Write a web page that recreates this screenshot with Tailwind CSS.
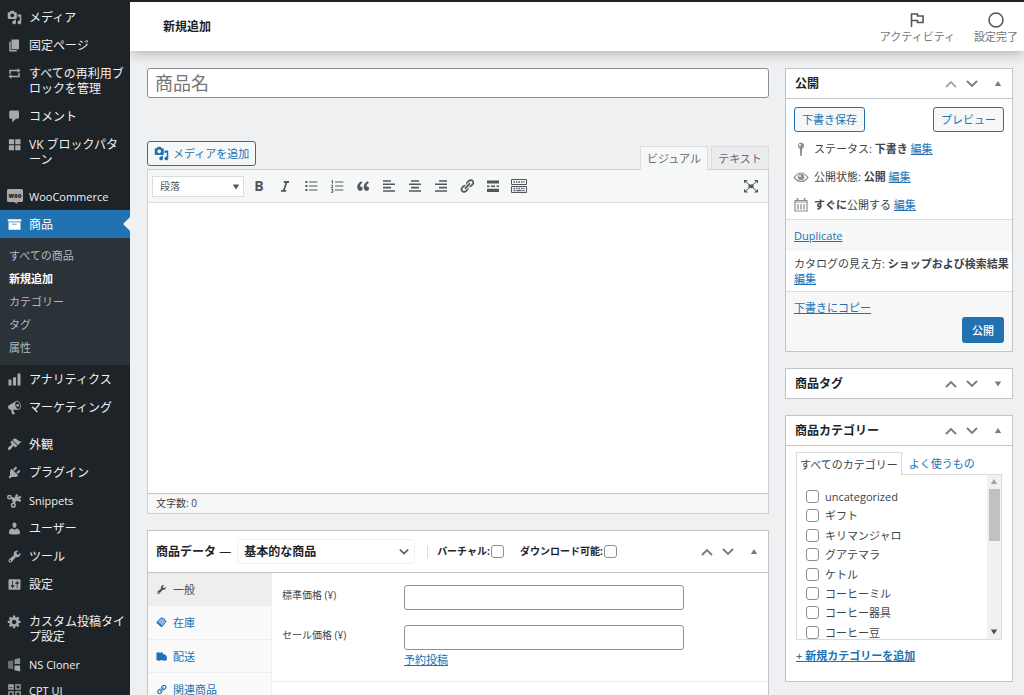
<!DOCTYPE html>
<html lang="ja">
<head>
<meta charset="utf-8">
<meta name="viewport" content="width=device-width, initial-scale=1">
<title>新規追加</title>
<script src="https://cdn.jsdelivr.net/npm/@tailwindcss/browser@4"></script>
</head>
<body class="flex h-screen flex-col overflow-hidden bg-[#eff0f1] font-['Open_Sans','Noto_Sans_CJK_JP',sans-serif] text-[11px] leading-[15px] text-[#3c434a]">

<svg class="hidden" aria-hidden="true">
  <symbol id="media" viewBox="0 0 20 20"><path d="M13 11V4c0-.55-.45-1-1-1h-1.67L9 1H5L3.67 3H2c-.55 0-1 .45-1 1v7c0 .55.45 1 1 1h10c.55 0 1-.45 1-1zM7 4.5c1.38 0 2.5 1.12 2.5 2.5S8.38 9.5 7 9.5 4.5 8.38 4.5 7 5.62 4.5 7 4.5zM14 6h5v10.5c0 1.38-1.12 2.5-2.5 2.5S14 17.88 14 16.5s1.12-2.5 2.5-2.5c.17 0 .34.02.5.05V9h-3V6zm-4 8.05V13h2v3.5c0 1.38-1.12 2.5-2.5 2.5S7 17.88 7 16.5 8.12 14 9.5 14c.17 0 .34.02.5.05z"/></symbol>
  <symbol id="wrench" viewBox="0 0 20 20"><path d="M16.68 9.77c-1.34 1.34-3.3 1.67-4.95.99l-5.41 6.52c-.99.99-2.59.99-3.58 0s-.99-2.59 0-3.57l6.52-5.42c-.68-1.65-.35-3.61.99-4.95 1.28-1.28 3.12-1.62 4.72-1.06l-2.89 2.89 2.82 2.82 2.86-2.87c.53 1.58.18 3.39-1.08 4.65zM3.81 16.21c.4.39 1.04.39 1.43 0 .4-.4.4-1.04 0-1.43-.39-.4-1.03-.4-1.43 0-.39.39-.39 1.03 0 1.43z"/></symbol>
  <symbol id="link" viewBox="0 0 20 20"><path d="M17.74 2.76c1.68 1.69 1.68 4.41 0 6.1l-1.53 1.52c-1.12 1.12-2.7 1.47-4.14 1.09l2.62-2.61.76-.77.76-.76c.84-.84.84-2.2 0-3.04-.84-.85-2.2-.85-3.04 0l-.77.76-3.38 3.38c-.37-1.44-.02-3.02 1.1-4.14l1.52-1.53c1.69-1.68 4.42-1.68 6.1 0zM8.59 13.43l5.34-5.34c.42-.42.42-1.1 0-1.52-.44-.43-1.13-.39-1.53 0l-5.33 5.34c-.42.42-.42 1.1 0 1.52.44.43 1.13.39 1.52 0zm-.76 2.29l4.14-4.15c.38 1.44.03 3.02-1.09 4.14l-1.52 1.53c-1.69 1.68-4.41 1.68-6.1 0-1.68-1.68-1.68-4.42 0-6.1l1.53-1.52c1.12-1.12 2.7-1.47 4.14-1.1l-4.14 4.15c-.85.84-.85 2.2 0 3.05.84.84 2.2.84 3.04 0z"/></symbol>
  <symbol id="up" viewBox="0 0 12 12"><path d="M1 9l5-5 5 5" fill="none" stroke="currentColor" stroke-width="1.9"/></symbol>
  <symbol id="down" viewBox="0 0 12 12"><path d="M1 3l5 5 5-5" fill="none" stroke="currentColor" stroke-width="1.9"/></symbol>
  <symbol id="tri-up" viewBox="0 0 8 8"><path d="M4 1L7.200 6H.8z"/></symbol>
  <symbol id="tri-down" viewBox="0 0 8 8"><path d="M4 6.500L7.200 1.500H.8z"/></symbol>
</svg>

<div class="h-[2px] shrink-0 bg-[#1d2327]"></div>

<div class="flex min-h-0 flex-1">
  <!-- Admin menu -->
  <nav aria-label="メインメニュー" class="w-[130px] shrink-0 overflow-hidden bg-[#1d2327] pt-px text-xs leading-[15px] text-[#f0f0f1]">
    <ul class="break-all">
      <li><a href="#" class="flex pt-[7px] pb-[6px] pr-1"><span class="flex w-[29px] shrink-0 justify-center"><svg class="size-[15px] fill-[#a7aaad]"><use href="#media"/></svg></span>メディア</a></li>
      <li><a href="#" class="flex pt-[7px] pb-[6px] pr-1"><span class="flex w-[29px] shrink-0 justify-center"><svg class="size-[15px] fill-[#a7aaad]" viewBox="0 0 20 20"><path d="M6 15V2h10v13H6zm-1 1h8v2H3V5h2v11z"/></svg></span>固定ページ</a></li>
      <li><a href="#" class="flex pt-[7px] pb-[6px] pr-1"><span class="flex w-[29px] shrink-0 justify-center"><svg class="size-[15px] fill-[#a7aaad]" viewBox="0 0 20 20"><path d="M5 7v3l-2 1.500V5h11V3l4 3.010L14 9V7H5zm10 6v-3l2-1.500V15H6v2l-4-3.010L6 11v2h9z"/></svg></span>すべての再利用ブロックを管理</a></li>
      <li><a href="#" class="flex pt-[7px] pb-[6px] pr-1"><span class="flex w-[29px] shrink-0 justify-center"><svg class="size-[15px] fill-[#a7aaad]" viewBox="0 0 20 20"><path d="M5 2h9c1.100 0 2 .9 2 2v7c0 1.100-.9 2-2 2h-2l-5 5v-5H5c-1.100 0-2-.9-2-2V4c0-1.100.9-2 2-2z"/></svg></span>コメント</a></li>
      <li><a href="#" class="flex pt-[7px] pb-[6px] pr-1"><span class="flex w-[29px] shrink-0 justify-center"><svg class="size-[15px] fill-[#a7aaad]" viewBox="0 0 20 20"><path d="M2.500 3h7v6.500h-7zM11 3h7v6.500h-7zM2.500 11h7v6.500h-7zM11 11h7v6.500h-7z"/></svg></span><span class="[line-break:anywhere]">VK ブロックパターン</span></a></li>
      <li class="mt-[9px]"><a href="#" class="flex pt-[7px] pb-[6px] text-[11px]"><span class="flex w-[29px] shrink-0 justify-center"><svg class="h-[15px] w-4" viewBox="0 0 16 15"><path d="M1.500 0h13A1.500 1.500 0 0 1 16 1.500v10a1.500 1.500 0 0 1-1.500 1.500H10l.8 2L7 13H1.500A1.500 1.500 0 0 1 0 11.500v-10A1.500 1.500 0 0 1 1.500 0z" fill="#a7aaad"/><text x="8" y="8.500" text-anchor="middle" font-family="Noto Sans" font-weight="900" font-size="6" fill="#1d2327">woo</text></svg></span>WooCommerce</a></li>
      <li><a href="#" aria-current="true" class="relative flex bg-[#2271b1] pt-[7px] pb-[6px] text-white"><span class="flex w-[29px] shrink-0 justify-center"><svg class="size-[15px] fill-white" viewBox="0 0 20 20"><path d="M19 3v3H1V3h18zM2 7h16v10H2V7zm11 3V9H7v1h6z"/></svg></span>商品
        <svg class="absolute top-[7px] right-0 h-[14px] w-[7px] fill-[#eff0f1]" viewBox="0 0 7 14"><path d="M7 0v14L0 7z"/></svg></a>
        <ul class="bg-[#2c3338] py-[6px] pl-[9px] text-[11px] leading-[23px] text-[#b4b9be]">
          <li><a href="#">すべての商品</a></li>
          <li><a href="#" class="font-bold text-white">新規追加</a></li>
          <li><a href="#">カテゴリー</a></li>
          <li><a href="#">タグ</a></li>
          <li><a href="#">属性</a></li>
        </ul>
      </li>
      <li><a href="#" class="flex pt-[7px] pb-[6px]"><span class="flex w-[29px] shrink-0 justify-center"><svg class="size-[15px] fill-[#a7aaad]" viewBox="0 0 20 20"><path d="M18 18V2h-4v16h4zm-6 0V7H8v11h4zm-6 0v-8H2v8h4z"/></svg></span>アナリティクス</a></li>
      <li><a href="#" class="flex pt-[7px] pb-[6px]"><span class="flex w-[29px] shrink-0 justify-center"><svg class="size-[15px] fill-[#a7aaad]" viewBox="0 0 20 20"><path d="M18.150 5.940c.46 1.620.38 3.220-.02 4.480-.42 1.280-1.260 2.180-2.300 2.480-.16.06-.26.06-.4.06-.06.02-.12.02-.18.02-.06.02-.14.02-.22.02h-6.800l2.220 5.500c.02.14-.06.26-.14.34-.08.1-.24.16-.34.16H6.950c-.1 0-.26-.06-.34-.16-.08-.08-.16-.2-.14-.34l-1-5.500H4.250l-.02-.02c-.5.06-1.080-.18-1.540-.62s-.88-1.080-1.060-1.880c-.24-.8-.2-1.560-.02-2.200.18-.62.58-1.080 1.060-1.300l.02-.02 9-5.400c.1-.06.18-.1.24-.16.06-.04.14-.08.24-.12.16-.08.28-.12.5-.18 1.040-.3 2.240.1 3.220.98s1.840 2.240 2.260 3.860zm-2.580 5.980h-.02c.4-.1.74-.34 1.040-.7.58-.7.86-1.760.86-3.040 0-.64-.1-1.300-.28-1.980-.34-1.360-1.020-2.500-1.780-3.240s-1.680-1.100-2.460-.88c-.82.22-1.400.96-1.700 2-.32 1.040-.28 2.360.06 3.720.38 1.360 1 2.500 1.800 3.240.78.74 1.620 1.100 2.480.88z"/><circle cx="14.200" cy="7.200" r="1.800"/></svg></span>マーケティング</a></li>
      <li class="mt-[9px]"><a href="#" class="flex pt-[7px] pb-[6px]"><span class="flex w-[29px] shrink-0 justify-center"><svg class="size-[15px] fill-[#a7aaad]" viewBox="0 0 20 20"><path d="M14.480 11.060L7.410 3.990l1.500-1.500c.5-.56 2.300-.47 3.510.32 1.210.8 1.430 1.280 2.910 2.100 1.180.64 2.450 1.260 4.450.85zm-.71.71L6.700 4.700 4.930 6.470c-.39.39-.39 1.020 0 1.410l1.060 1.060c.39.39.39 1.030 0 1.420-.6.6-1.430 1.110-2.210 1.690-.35.26-.7.53-1.010.84C1.430 14.230.4 16.080 1.400 17.070c.99 1 2.840-.03 4.180-1.360.31-.31.58-.66.85-1.020.57-.78 1.080-1.610 1.690-2.210.39-.39 1.020-.39 1.410 0l1.060 1.060c.39.39 1.020.39 1.410 0z"/></svg></span>外観</a></li>
      <li><a href="#" class="flex pt-[7px] pb-[6px]"><span class="flex w-[29px] shrink-0 justify-center"><svg class="size-[15px] fill-[#a7aaad]" viewBox="0 0 20 20"><path d="M13.110 4.360L9.870 7.600 8 5.730l3.240-3.240c.35-.34 1.050-.2 1.560.32.52.51.66 1.210.31 1.550zm-8 1.770l.91-1.120 9.010 9.010-1.190.84c-.71.71-2.630 1.160-3.820 1.160H6.140L4.900 17.260c-.59.59-1.540.59-2.120 0-.59-.58-.59-1.530 0-2.120l1.240-1.240v-3.880c0-1.130.4-3.190 1.090-3.890zm7.260 3.970l3.240-3.240c.34-.35 1.040-.21 1.550.31.52.51.66 1.210.31 1.550l-3.240 3.250z"/></svg></span>プラグイン</a></li>
      <li><a href="#" class="flex pt-[7px] pb-[6px] text-[11px]"><span class="flex w-[29px] shrink-0 justify-center"><svg class="size-[15px] fill-none stroke-[#a7aaad]" viewBox="0 0 20 20"><circle cx="3.300" cy="5.500" r="2.300" stroke-width="2"/><circle cx="8.500" cy="16.200" r="2.400" stroke-width="2"/><path d="M5.500 6.500l13 4M9 14L13.500 2" stroke-width="3"/><path d="M7 10.500L18.500 5" stroke-width="3"/></svg></span>Snippets</a></li>
      <li><a href="#" class="flex pt-[7px] pb-[6px]"><span class="flex w-[29px] shrink-0 justify-center"><svg class="size-[15px] fill-[#a7aaad]" viewBox="0 0 20 20"><path d="M10 9.250c-2.270 0-2.730-3.440-2.730-3.440C7 4.020 7.820 2 9.970 2c2.160 0 2.980 2.020 2.710 3.810 0 0-.41 3.440-2.680 3.440zm0 2.570L12.720 10c2.390 0 4.520 2.330 4.520 4.530v2.490s-3.650 1.130-7.240 1.130c-3.650 0-7.240-1.130-7.240-1.130v-2.490c0-2.250 1.940-4.480 4.470-4.480z"/></svg></span>ユーザー</a></li>
      <li><a href="#" class="flex pt-[7px] pb-[6px]"><span class="flex w-[29px] shrink-0 justify-center"><svg class="size-[15px] fill-[#a7aaad]"><use href="#wrench"/></svg></span>ツール</a></li>
      <li><a href="#" class="flex pt-[7px] pb-[6px]"><span class="flex w-[29px] shrink-0 justify-center"><svg class="size-[15px] fill-[#a7aaad]" viewBox="0 0 20 20"><path d="M18 16V4c0-.55-.45-1-1-1H3c-.55 0-1 .45-1 1v12c0 .55.45 1 1 1h14c.55 0 1-.45 1-1zM8 11h1c.55 0 1 .45 1 1s-.45 1-1 1H8v1.500c0 .28-.22.5-.5.5s-.5-.22-.5-.5V13H6c-.55 0-1-.45-1-1s.45-1 1-1h1V5.500c0-.28.22-.5.5-.5s.5.22.5.5V11zm5-2h-1c-.55 0-1-.45-1-1s.45-1 1-1h1V5.500c0-.28.22-.5.5-.5s.5.22.5.5V7h1c.55 0 1 .45 1 1s-.45 1-1 1h-1v5.500c0 .28-.22.5-.5.5s-.5-.22-.5-.5V9z"/></svg></span>設定</a></li>
      <li class="mt-[9px]"><a href="#" class="flex pt-[7px] pb-[6px] pr-1"><span class="flex w-[29px] shrink-0 justify-center"><svg class="size-[15px] fill-[#a7aaad]" viewBox="0 0 20 20"><path d="M18 12h-2.180c-.17.7-.44 1.350-.81 1.930l1.540 1.540-2.100 2.100-1.540-1.540c-.58.36-1.230.63-1.910.79V19H8v-2.180c-.68-.16-1.330-.43-1.910-.79l-1.540 1.540-2.120-2.120 1.540-1.540c-.36-.58-.63-1.230-.79-1.910H1V9.030h2.170c.16-.7.44-1.350.8-1.940L2.430 5.550l2.100-2.100 1.540 1.540c.58-.37 1.240-.64 1.930-.81V2h3v2.180c.68.16 1.330.43 1.910.79l1.540-1.540 2.120 2.120-1.540 1.540c.36.59.64 1.240.8 1.940H18V12zm-8.500 1.500c1.660 0 3-1.340 3-3s-1.340-3-3-3-3 1.340-3 3 1.340 3 3 3z"/></svg></span>カスタム投稿タイプ設定</a></li>
      <li><a href="#" class="flex pt-[7px] pb-[6px] text-[11px]"><span class="flex w-[29px] shrink-0 justify-center"><svg class="size-[15px]" viewBox="0 0 16 16"><path d="M1 4.500l5.500-1v9.500L1 12z" fill="#6c7075"/><path d="M8 2.500L14 1v6.500H8z" fill="#8c9095"/><path d="M8 9h6v6.500L8 14z" fill="#a7aaad"/></svg></span>NS Cloner</a></li>
      <li><a href="#" class="flex pt-[5px] pb-[6px] text-[11px]"><span class="flex w-[29px] shrink-0 justify-center"><svg class="size-[15px] fill-none stroke-[#a7aaad]" viewBox="0 0 16 16"><path d="M2 2h4.500v4.500H2zM9.500 2H14v4.500H9.500zM2 9.500h4.500V14H2zM9.500 9.500H14V14H9.500zM2 2l4.500 4.500M6.500 2L2 6.500" stroke-width="1.300"/></svg></span>CPT UI</a></li>
    </ul>
  </nav>

  <div class="flex min-w-0 flex-1 flex-col">
    <!-- Page header -->
    <header class="z-10 flex h-[49px] shrink-0 items-center justify-between bg-white pl-[33px] shadow-[0_2px_12px_rgba(0,0,0,0.28)] [clip-path:inset(0_0_-20px_0)]">
      <h1 class="text-xs font-semibold text-[#1e1e1e]">新規追加</h1>
      <div class="flex gap-[19px] pr-[6px] text-[11px] leading-[15px] text-[#757575]">
        <button type="button" class="flex flex-col items-center gap-px pt-[2px]"><svg class="size-4" viewBox="0 0 16 16" fill="none" stroke="#50575e" stroke-width="1.600"><path d="M2.500 15V2h6v2h5.500v6.500H8.500v-2h-6"/></svg>アクティビティ</button>
        <button type="button" class="flex flex-col items-center gap-px pt-[2px]"><svg class="size-4" viewBox="0 0 16 16" fill="none" stroke="#50575e" stroke-width="1.500"><circle cx="8" cy="8" r="7"/></svg>設定完了</button>
      </div>
    </header>

    <main class="flex min-h-0 flex-1 items-start gap-4 pt-[17px] pr-[11px] pl-[17px]">
      <div class="min-w-0 flex-1">
        <input type="text" aria-label="商品名" placeholder="商品名" class="block h-[30px] w-full rounded-[3px] border border-[#8c8f94] bg-white px-[7px] text-lg leading-6 placeholder:text-[#757575]">

        <div class="mt-[43px] flex items-start justify-between">
          <button type="button" class="flex h-[25px] items-center gap-1 rounded-[3px] border border-[#2271b1] bg-[#f6f7f7] px-[6px] text-[#2271b1]"><svg class="size-[15px] fill-[#2271b1]"><use href="#media"/></svg>メディアを追加</button>
          <div class="mt-[5px] flex gap-[3px] text-[#646970]">
            <button type="button" class="relative z-[1] -mb-px h-6 w-[68px] border border-b-0 border-[#dcdcde] bg-[#f6f7f7]">ビジュアル</button>
            <button type="button" class="h-[23px] w-[58px] border border-b-0 border-[#dcdcde] bg-[#ebecee]">テキスト</button>
          </div>
        </div>

        <!-- Editor -->
        <section aria-label="エディター" class="border border-[#d0d1d4] bg-white">
          <div class="flex h-[33px] items-center border-b border-[#dcdcde] bg-[#f6f7f7] pr-[9px] pl-1 text-[#50575e]">
            <div class="relative mr-[2px]">
              <select aria-label="段落スタイル" class="block h-[21px] w-[92px] appearance-none border border-[#dcdcde] bg-white pl-[7px] text-[10px] leading-4"><option>段落</option></select>
              <svg class="pointer-events-none absolute top-[7px] right-1 size-2 fill-[#50575e]"><use href="#tri-down"/></svg>
            </div>
            <div class="flex items-center">
              <button type="button" aria-label="太字" class="flex w-[26px] items-center justify-center text-sm font-bold">B</button>
              <button type="button" aria-label="イタリック" class="flex w-[26px] justify-center"><svg class="size-4" viewBox="0 0 20 20" fill="none" stroke="currentColor" stroke-width="2.200"><path d="M8.500 5H15M5 16h6.500M12 5L8.300 16"/></svg></button>
              <button type="button" aria-label="番号なしリスト" class="flex w-[26px] justify-center"><svg class="size-4" viewBox="0 0 20 20" fill="none" stroke="currentColor" stroke-width="1.500"><path d="M7.500 5H18M7.500 10H18M7.500 15H18"/><path d="M3 5h2.500M3 10h2.500M3 15h2.500" stroke-width="2.500"/></svg></button>
              <button type="button" aria-label="番号付きリスト" class="flex w-[26px] justify-center"><svg class="size-4" viewBox="0 0 20 20" fill="none" stroke="currentColor" stroke-width="1.200"><path d="M7.500 5H18M7.500 10H18M7.500 15H18M3 4l1.300-1v4M2.800 9h1.800v1.200L3 12h2M2.800 14h2v4h-2M3.500 16h1.300"/></svg></button>
              <button type="button" aria-label="引用" class="flex w-[26px] justify-center"><svg class="size-4" viewBox="0 0 20 20" fill="currentColor"><path d="M9.490 13.220c0-.74-.2-1.380-.61-1.900-.62-.78-1.830-.88-2.530-.72-.29-1.650 1.110-3.750 2.920-4.650L7.880 4c-2.730 1.300-5.420 4.280-4.960 8.050C3.210 14.430 4.590 16 6.540 16c.85 0 1.560-.25 2.120-.75s.83-1.180.83-2.030zm8.050 0c0-.74-.2-1.380-.61-1.900-.63-.78-1.830-.88-2.530-.72-.29-1.650 1.110-3.750 2.920-4.650L15.930 4c-2.730 1.300-5.410 4.280-4.950 8.050.29 2.380 1.660 3.950 3.610 3.950.85 0 1.560-.25 2.120-.75s.83-1.180.83-2.030z"/></svg></button>
              <button type="button" aria-label="左寄せ" class="flex w-[26px] justify-center"><svg class="size-4" viewBox="0 0 16 16" fill="none" stroke="currentColor" stroke-width="1.600"><path d="M2 3h8M2 6.300h12M2 9.600h8M2 13h12"/></svg></button>
              <button type="button" aria-label="中央揃え" class="flex w-[26px] justify-center"><svg class="size-4" viewBox="0 0 16 16" fill="none" stroke="currentColor" stroke-width="1.600"><path d="M4 3h8M2 6.300h12M4 9.600h8M2 13h12"/></svg></button>
              <button type="button" aria-label="右寄せ" class="flex w-[26px] justify-center"><svg class="size-4" viewBox="0 0 16 16" fill="none" stroke="currentColor" stroke-width="1.600"><path d="M6 3h8M2 6.300h12M6 9.600h8M2 13h12"/></svg></button>
              <button type="button" aria-label="リンクの挿入" class="flex w-[26px] justify-center"><svg class="size-4 fill-current"><use href="#link"/></svg></button>
              <button type="button" aria-label="続きを読むタグ" class="flex w-[26px] justify-center"><svg class="size-4" viewBox="0 0 16 16" fill="none" stroke="currentColor"><path d="M2 4h12M2 12.300h12" stroke-width="3.200"/><path d="M2 8.200h2.500M6 8.200h4M11.500 8.200H14" stroke-width="1.400"/></svg></button>
              <button type="button" aria-label="ツールバー切り替え" class="flex w-[26px] justify-center"><svg class="size-4" viewBox="0 0 16 16" fill="none" stroke="currentColor"><path d="M.5 1.500h15v5H.5zM.5 8.500h15v6H.5z"/><path d="M2.500 4h11M2.500 10.500h11" stroke-width="1.600" stroke-dasharray="1.500 1"/><path d="M2.500 12.600h2M5.500 12.600h5M11.500 12.600h2" stroke-width="1.200"/></svg></button>
            </div>
            <button type="button" aria-label="集中執筆モード" class="ml-auto"><svg class="size-4" viewBox="0 0 16 16" fill="currentColor" stroke="currentColor"><path d="M2.500 3.500l11 9.500M13.500 3.500L2.500 13" stroke-width="1"/><path d="M5.500 6.500h5v3.500h-5z" stroke="none"/><path d="M1 2h4L1 5.500zM15 2h-4l4 3.500zM1 14.500h4L1 11zM15 14.500h-4l4-3.500z" stroke="none"/></svg></button>
          </div>
          <textarea aria-label="商品の説明" class="block h-[290px] w-full resize-none bg-white p-2"></textarea>
          <div class="flex h-5 items-center border-t border-[#c3c4c7] bg-[#f6f7f7] px-2 text-[10px]">文字数: 0</div>
        </section>

        <!-- Product data -->
        <section class="mt-4 border border-[#c3c4c7] bg-white">
          <div class="flex h-[42px] items-center border-b border-[#c3c4c7] pr-[10px] pl-2 text-[#1d2327]">
            <h2 class="text-xs font-bold whitespace-nowrap">商品データ <span class="font-normal">—</span></h2>
            <div class="relative ml-[6px]">
              <select aria-label="商品タイプ" class="block h-[25px] w-[178px] appearance-none rounded-[3px] border border-[#f0f0f1] bg-white pl-[6px] text-xs font-bold"><option>基本的な商品</option></select>
              <svg class="pointer-events-none absolute top-2 right-[6px] size-[10px] text-[#50575e]"><use href="#down"/></svg>
            </div>
            <div class="ml-3 h-3 w-px bg-[#dcdcde]"></div>
            <label class="ml-[9px] flex items-center gap-px text-[10px] font-bold whitespace-nowrap">バーチャル:<input type="checkbox" class="size-[13px] appearance-none rounded-[3px] border border-[#8c8f94] bg-white"></label>
            <label class="ml-4 flex items-center gap-px text-[10px] font-bold whitespace-nowrap">ダウンロード可能:<input type="checkbox" class="size-[13px] appearance-none rounded-[3px] border border-[#8c8f94] bg-white"></label>
            <div class="ml-auto flex items-center text-[#787c82]">
              <button type="button" aria-label="上に移動"><svg class="size-3"><use href="#up"/></svg></button>
              <button type="button" aria-label="下に移動" class="ml-[9px]"><svg class="size-3"><use href="#down"/></svg></button>
              <button type="button" aria-label="パネルを閉じる" class="ml-4"><svg class="size-2 fill-current"><use href="#tri-up"/></svg></button>
            </div>
          </div>
          <div class="flex">
            <ul class="w-[124px] shrink-0 border-r border-[#eeeeee] bg-[#fafafa] text-[#2271b1]">
              <li><a href="#" class="flex h-[33px] items-center gap-[6px] border-b border-[#eeeeee] bg-[#eeeeee] pl-2 text-[#555555]"><svg class="size-[11px] fill-current"><use href="#wrench"/></svg>一般</a></li>
              <li><a href="#" class="flex h-[34px] items-center gap-[6px] border-b border-[#eeeeee] pl-2"><svg class="size-[11px]" viewBox="0 0 12 12" stroke="currentColor"><path d="M1 5.500L5.500 1l3 .5L11 5l-4.500 5.500z" fill="#8fb4d6"/><path d="M1 5.500L6.500 10.500" stroke-width="1.800"/></svg>在庫</a></li>
              <li><a href="#" class="flex h-[33px] items-center gap-[6px] border-b border-[#eeeeee] pl-2"><svg class="size-[11px] fill-current" viewBox="0 0 12 12"><path d="M.5 1.500h7v2h2L11.800 6v4h-1.300a1.500 1.500 0 0 1-2.600 0H4.600a1.500 1.500 0 0 1-2.600 0H.5z"/></svg>配送</a></li>
              <li><a href="#" class="flex h-[33px] items-center gap-[6px] pl-2"><svg class="size-[11px] fill-current"><use href="#link"/></svg>関連商品</a></li>
            </ul>
            <div class="min-w-0 flex-1 text-[10px]">
              <div class="flex flex-col gap-[15px] border-b border-[#eeeeee] pt-3 pb-[14px] pl-[10px]">
                <div class="flex items-start">
                  <label for="price" class="w-[122px] shrink-0 pt-[3px]">標準価格 (¥)</label>
                  <div class="flex-1">
                    <input id="price" type="text" class="block h-[25px] w-[77%] rounded-[3px] border border-[#8c8f94] bg-white px-2">
                  </div>
                </div>
                <div class="flex items-start">
                  <label for="sale" class="w-[122px] shrink-0 pt-[3px]">セール価格 (¥)</label>
                  <div class="flex-1">
                    <input id="sale" type="text" class="block h-[25px] w-[77%] rounded-[3px] border border-[#8c8f94] bg-white px-2">
                    <a href="#" class="mt-[2px] block text-[11px] text-[#2271b1] underline">予約投稿</a>
                  </div>
                </div>
              </div>
            </div>
          </div>
        </section>
      </div>

      <!-- Side panels -->
      <aside class="flex w-[228px] shrink-0 flex-col gap-4">
        <section class="border border-[#c3c4c7] bg-white">
          <div class="flex h-[30px] items-center border-b border-[#c3c4c7] pr-[10px] pl-[9px]">
            <h2 class="text-xs font-bold text-[#1d2327]">公開</h2>
            <div class="ml-auto flex items-center text-[#787c82]">
              <button type="button" aria-label="上に移動" class="text-[#a7aaad]"><svg class="size-3"><use href="#up"/></svg></button>
              <button type="button" aria-label="下に移動" class="ml-[9px]"><svg class="size-3"><use href="#down"/></svg></button>
              <button type="button" aria-label="パネルを閉じる" class="ml-4"><svg class="size-2 fill-current"><use href="#tri-up"/></svg></button>
            </div>
          </div>
          <div class="flex justify-between px-2 pt-2 text-[#2271b1]">
            <button type="button" class="h-[25px] rounded-[3px] border border-[#2271b1] bg-[#f6f7f7] px-[7px]">下書き保存</button>
            <button type="button" class="h-[25px] rounded-[3px] border border-[#2271b1] bg-[#f6f7f7] px-[7px]">プレビュー</button>
          </div>
          <ul class="border-b border-[#dcdcde] pt-[3px] pl-[7px] leading-7">
            <li class="flex items-center gap-[5px]"><svg class="size-4 fill-[#8c8f94]" viewBox="0 0 16 16"><path d="M8 1.500a3.300 3.300 0 0 1 1.200 6.300L8.700 15H7.300L6.800 7.800A3.300 3.300 0 0 1 8 1.500z"/><circle cx="7" cy="4" r="1" fill="#fff"/></svg><span>ステータス: <b>下書き</b> <a href="#" class="text-[#2271b1] underline">編集</a></span></li>
            <li class="flex items-center gap-[5px]"><svg class="size-4" viewBox="0 0 16 16" fill="none" stroke="#8c8f94"><path d="M1 8.500C3.500 5 5.500 4 8 4s4.500 1 7 4.500C12.500 11.500 10.500 12.500 8 12.500S3.500 11.500 1 8.500z" stroke-width="1.200"/><circle cx="8" cy="8" r="2.800" fill="#8c8f94"/><circle cx="7" cy="7" r=".9" fill="#fff" stroke="none"/></svg><span>公開状態: <b>公開</b> <a href="#" class="text-[#2271b1] underline">編集</a></span></li>
            <li class="flex items-center gap-[5px]"><svg class="size-4" viewBox="0 0 16 16" fill="none" stroke="#8c8f94"><path d="M2 3.500h12v10.500H2zM2 5h12" stroke-width="1.200"/><path d="M4.500 1V3.500M11.500 1V3.500" stroke-width="1.600"/><path d="M5 7v5.500M8 7v5.500M11 7v5.500" stroke-width="1.300"/></svg><span><b>すぐに</b>公開する <a href="#" class="text-[#2271b1] underline">編集</a></span></li>
          </ul>
          <div class="bg-[#f6f7f7] px-2 py-2"><a href="#" class="text-[#2271b1] underline">Duplicate</a></div>
          <div class="border-b border-[#dcdcde] py-[5px] pl-2 whitespace-nowrap">カタログの見え方: <b>ショップおよび検索結果</b><br><a href="#" class="text-[#2271b1] underline">編集</a></div>
          <div class="bg-[#f6f7f7] px-2 py-2">
            <a href="#" class="block w-max text-[#2271b1] underline">下書きにコピー</a>
            <div class="mt-[2px] flex justify-end"><button type="button" class="h-[26px] rounded-[3px] bg-[#2271b1] px-[10px] font-medium text-white">公開</button></div>
          </div>
        </section>

        <section class="border border-[#c3c4c7] bg-white">
          <div class="flex h-[29px] items-center pr-[10px] pl-[9px]">
            <h2 class="text-xs font-bold text-[#1d2327]">商品タグ</h2>
            <div class="ml-auto flex items-center text-[#787c82]">
              <button type="button" aria-label="上に移動"><svg class="size-3"><use href="#up"/></svg></button>
              <button type="button" aria-label="下に移動" class="ml-[9px]"><svg class="size-3"><use href="#down"/></svg></button>
              <button type="button" aria-label="パネルを開く" class="ml-4"><svg class="size-2 fill-current"><use href="#tri-down"/></svg></button>
            </div>
          </div>
        </section>

        <section class="border border-[#c3c4c7] bg-white">
          <div class="flex h-[30px] items-center border-b border-[#c3c4c7] pr-[10px] pl-[9px]">
            <h2 class="text-xs font-bold text-[#1d2327]">商品カテゴリー</h2>
            <div class="ml-auto flex items-center text-[#787c82]">
              <button type="button" aria-label="上に移動"><svg class="size-3"><use href="#up"/></svg></button>
              <button type="button" aria-label="下に移動" class="ml-[9px]"><svg class="size-3"><use href="#down"/></svg></button>
              <button type="button" aria-label="パネルを閉じる" class="ml-4"><svg class="size-2 fill-current"><use href="#tri-up"/></svg></button>
            </div>
          </div>
          <div class="px-[10px] pt-[6px] pb-[18px]">
            <div class="flex">
              <button type="button" class="relative z-[1] -mb-px h-[23px] border border-b-0 border-[#dcdcde] bg-white px-[3px] whitespace-nowrap">すべてのカテゴリー</button>
              <button type="button" class="h-[22px] px-[7px] whitespace-nowrap text-[#2271b1]">よく使うもの</button>
            </div>
            <div class="flex h-[166px] overflow-hidden border border-[#dcdcde]">
              <ul class="grid h-[167px] flex-1 pt-3 pl-[9px] leading-[19px]">
                <li><label class="flex items-center gap-[6px]"><input type="checkbox" class="size-[13px] appearance-none rounded-[3px] border border-[#8c8f94]">uncategorized</label></li>
                <li><label class="flex items-center gap-[6px]"><input type="checkbox" class="size-[13px] appearance-none rounded-[3px] border border-[#8c8f94]">ギフト</label></li>
                <li><label class="flex items-center gap-[6px]"><input type="checkbox" class="size-[13px] appearance-none rounded-[3px] border border-[#8c8f94]">キリマンジャロ</label></li>
                <li><label class="flex items-center gap-[6px]"><input type="checkbox" class="size-[13px] appearance-none rounded-[3px] border border-[#8c8f94]">グアテマラ</label></li>
                <li><label class="flex items-center gap-[6px]"><input type="checkbox" class="size-[13px] appearance-none rounded-[3px] border border-[#8c8f94]">ケトル</label></li>
                <li><label class="flex items-center gap-[6px]"><input type="checkbox" class="size-[13px] appearance-none rounded-[3px] border border-[#8c8f94]">コーヒーミル</label></li>
                <li><label class="flex items-center gap-[6px]"><input type="checkbox" class="size-[13px] appearance-none rounded-[3px] border border-[#8c8f94]">コーヒー器具</label></li>
                <li><label class="flex items-center gap-[6px]"><input type="checkbox" class="size-[13px] appearance-none rounded-[3px] border border-[#8c8f94]">コーヒー豆</label></li>
              </ul>
              <div class="flex w-[14px] flex-col items-center bg-[#f1f1f1] py-[3px]" aria-hidden="true">
                <svg class="size-2 fill-[#a3a3a3]"><use href="#tri-up"/></svg>
                <div class="mt-[3px] h-[52px] w-[11px] bg-[#c1c1c1]"></div>
                <svg class="mt-auto size-2 fill-[#505050]"><use href="#tri-down"/></svg>
              </div>
            </div>
            <a href="#" class="mt-2 block w-max font-semibold text-[#2271b1] underline">+ 新規カテゴリーを追加</a>
          </div>
        </section>
      </aside>
    </main>
  </div>
</div>
</body>
</html>
